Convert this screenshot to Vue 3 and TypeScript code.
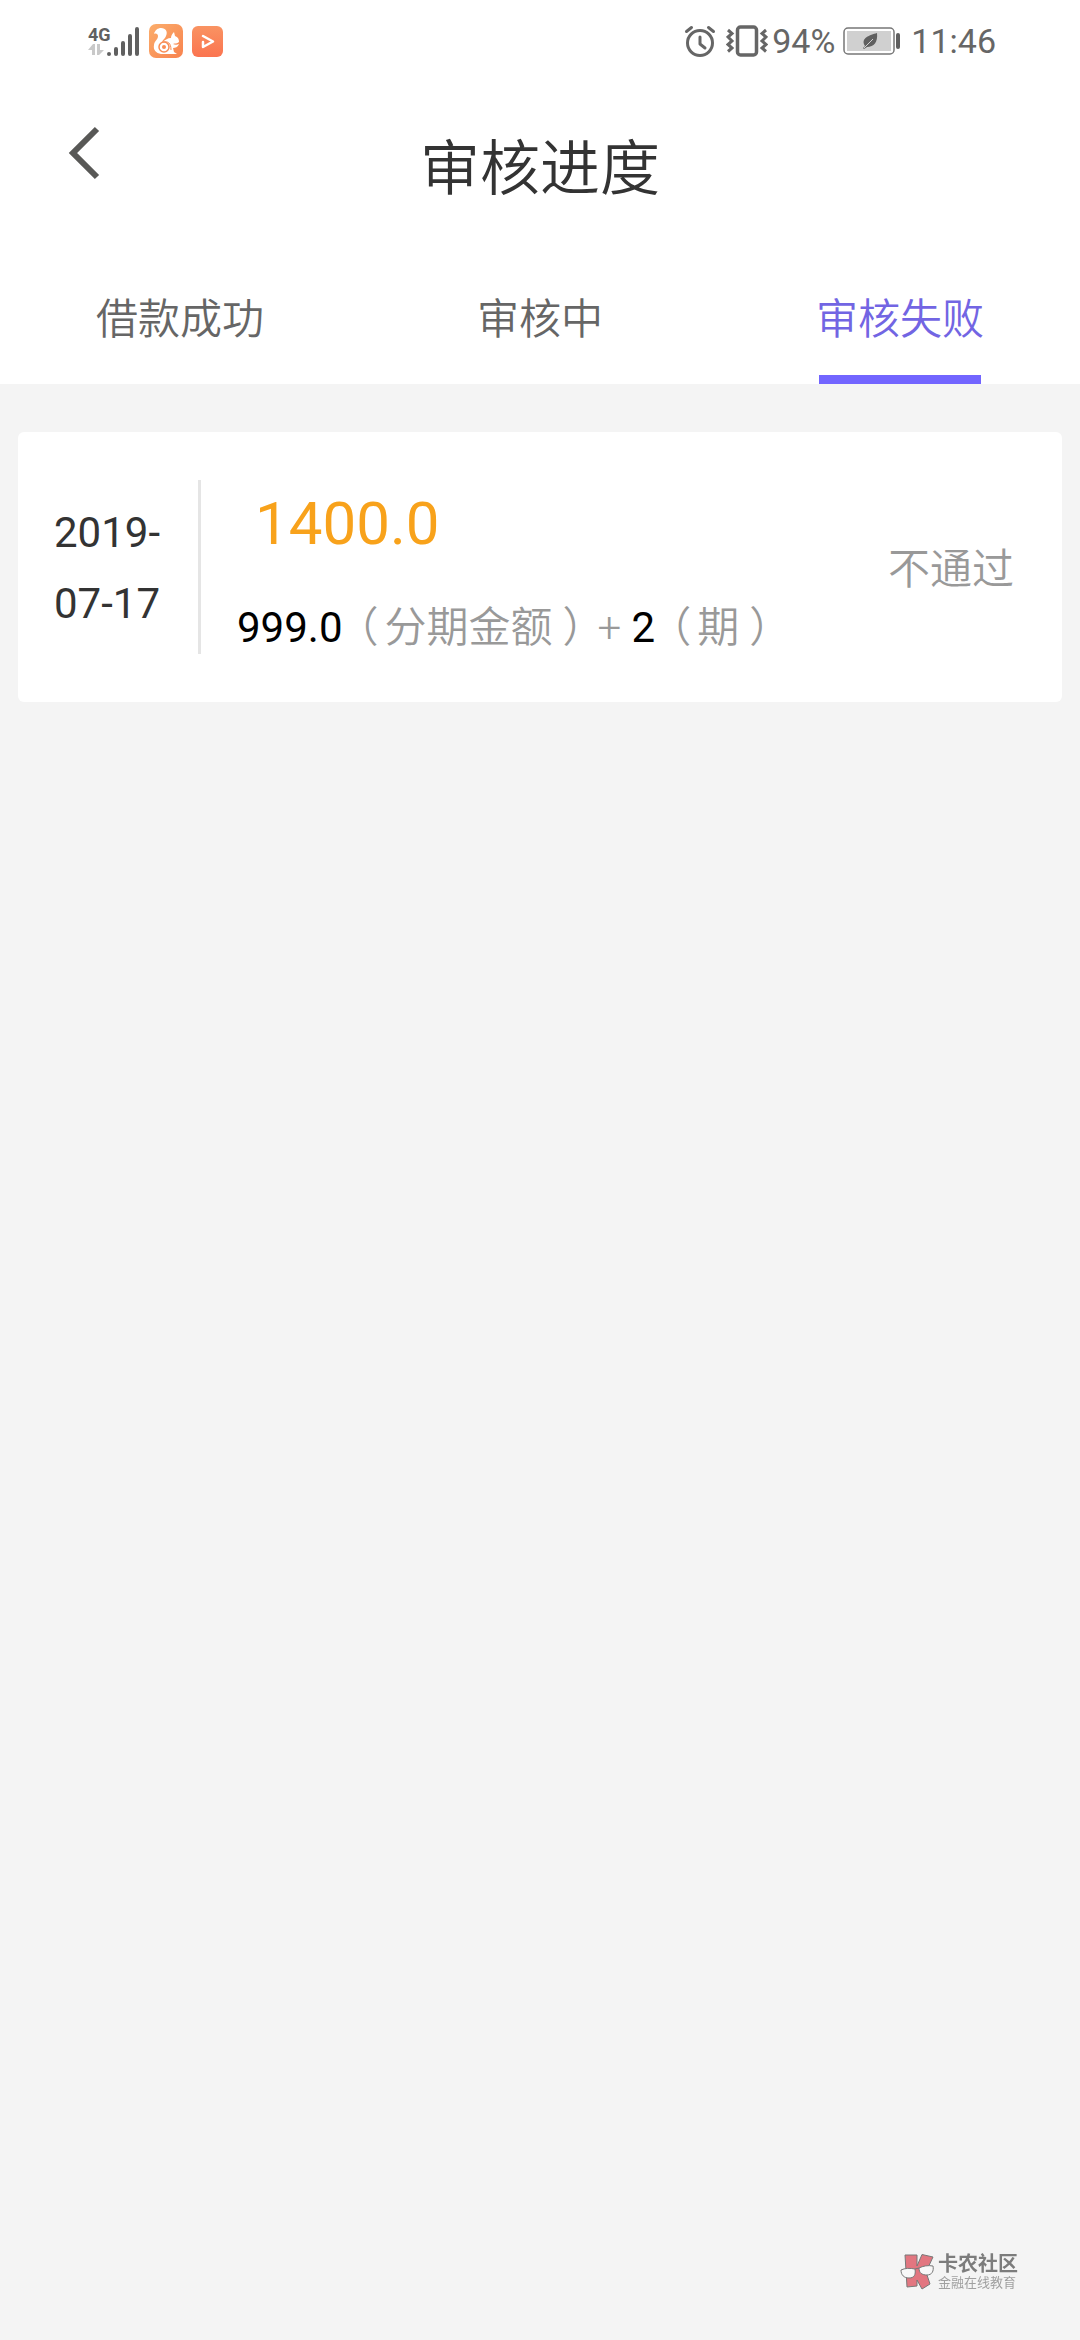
<script setup lang="ts">
import { ref } from 'vue'

interface Loan {
  date: string
  amount: string
  perTerm: string
  terms: number
  status: string
}

const tabs: string[] = ['借款成功', '审核中', '审核失败']
const active = ref<number>(2)

const loans: Loan[] = [
  { date: '2019-07-17', amount: '1400.0', perTerm: '999.0', terms: 2, status: '不通过' },
]
</script>

<template>
  <div class="page">
    <header class="top">
      <div class="status-bar">
        <div class="status-left">
          <div class="network">
            <span class="network-type">4G</span>
            <svg width="16" height="12" viewBox="0 0 16 12" fill="#c9c9c9" aria-hidden="true">
              <path d="M5 0h2v11H4V6H0z" />
              <path d="M9 0h3v6h4l-5 5H9z" />
            </svg>
          </div>
          <svg class="signal" width="34" height="32" viewBox="0 0 34 32" stroke="#606060" stroke-width="4" stroke-linecap="round" aria-hidden="true">
            <path d="M3 29v.1M10 24v5M17 18v11M24 11v18M31 4v25" />
          </svg>
          <svg class="app-a" width="34" height="34" viewBox="0 0 34 34" aria-hidden="true">
            <defs>
              <linearGradient id="ga" x1="0" y1="0" x2="1" y2="1">
                <stop offset="0" stop-color="#fbad6b" />
                <stop offset="1" stop-color="#f8834f" />
              </linearGradient>
            </defs>
            <rect width="34" height="34" rx="7" fill="url(#ga)" />
            <path d="M5 10C6 6 9 4 12 4c5 0 7 4 5 8-1 3-4 4-4 7 2-3 6-5 9-5 0-2 1-4 3-6l1 4c3 1 4 3 4 6-2 2-4 1-6 2 2 1 4 1 6 0-1 3-4 4-6 4l1 4 3 2H12c-5-1-8-4-7-9 0-4 4-5 4-9 0-2-2-3-4-2z" fill="#fff" />
            <circle cx="15" cy="23" r="5" fill="none" stroke="#f88d55" stroke-width="1.500" />
            <circle cx="15" cy="23" r="2" fill="#f88d55" />
            <path d="M14 18c5-1 8 1 8 8" fill="none" stroke="#f88d55" stroke-width="1" />
          </svg>
          <svg class="app-b" width="31" height="31" viewBox="0 0 31 31" aria-hidden="true">
            <defs>
              <linearGradient id="gb" x1="0" y1="0" x2="0" y2="1">
                <stop offset="0" stop-color="#f99362" />
                <stop offset="1" stop-color="#fb7450" />
              </linearGradient>
            </defs>
            <rect width="31" height="31" rx="6" fill="url(#gb)" />
            <path d="M11 16v5l10-5.500L11 10" fill="none" stroke="#fff" stroke-width="2.500" stroke-linecap="round" stroke-linejoin="round" />
          </svg>
        </div>
        <div class="status-right">
          <svg width="32" height="32" viewBox="0 0 32 32" fill="none" stroke="#666" stroke-width="3" stroke-linecap="round" stroke-linejoin="round" aria-hidden="true">
            <circle cx="16" cy="18" r="12.500" />
            <path d="M16 12v7l5 4M2.500 6.500l5-4M29.500 6.500l-5-4" />
          </svg>
          <svg class="vibrate" width="42" height="32" viewBox="0 0 42 32" fill="none" stroke="#666" stroke-width="3" aria-hidden="true">
            <rect x="11.500" y="2" width="19" height="28" rx="3" stroke-width="3.500" />
            <path d="M2 5l4 3.500-4 3.500 4 4-4 3.500 4 3.500-4 3.500M40 5l-4 3.500 4 3.500-4 4 4 3.500-4 3.500 4 3.500" stroke-width="3" />
          </svg>
          <span class="status-text percent">94%</span>
          <svg class="battery" width="58" height="28" viewBox="0 0 58 28" aria-hidden="true">
            <rect x="1" y="1" width="50" height="26" rx="4" fill="#fff" stroke="#777" stroke-width="1.500" />
            <rect x="4" y="4" width="44" height="20" fill="#d0d0d0" />
            <path d="M34 6c1 9-3 14-10 14l-3 2-1-1 2-2c-5-8 5-11 12-13z" fill="#606060" />
            <path d="M21 21l9-9" stroke="#d0d0d0" stroke-width="1" />
            <rect x="53" y="6" width="4" height="16" rx="2" fill="#606060" />
          </svg>
          <span class="status-text">11:46</span>
        </div>
      </div>

      <div class="title-bar">
        <button class="back" type="button" aria-label="返回">
          <svg width="32" height="54" viewBox="0 0 32 54" fill="none" stroke="#585856" stroke-width="6" aria-hidden="true">
            <path d="M29 3L5 27l24 24" />
          </svg>
        </button>
        <h1 class="title">审核进度</h1>
      </div>

      <nav class="tabs">
        <button
          v-for="(tab, i) in tabs"
          :key="tab"
          type="button"
          class="tab"
          :class="{ active: i === active }"
          @click="active = i"
        >
          {{ tab }}
        </button>
      </nav>
    </header>

    <main class="list">
      <article v-for="loan in loans" :key="loan.date" class="card">
        <time class="date" :datetime="loan.date">{{ loan.date }}</time>
        <div class="detail">
          <div class="amount">{{ loan.amount }}</div>
          <div class="plan">
            <b>{{ loan.perTerm }}</b><span class="open">（</span>分期金额<span class="close">）</span>+ <b>{{ loan.terms }}</b><span class="open">（</span>期<span class="close">）</span>
          </div>
        </div>
        <div class="result">{{ loan.status }}</div>
      </article>
    </main>

    <aside class="watermark">
      <svg width="36" height="38" viewBox="0 0 36 38" stroke="#777" stroke-width="1" stroke-linejoin="round" aria-hidden="true">
        <path d="M5 2h12v11l5-11.500L33 4l-7 15 4 12-8 5-5-9v6L7 34z" fill="#e27680" />
        <path d="M1 17c4-2 9-2 14-1 1 6-1 9-6 9s-8-3-8-8z" fill="#f8f8f8" />
        <path d="M19 15c4-2 9-3 14-2 1 5-1 9-6 9s-8-2-8-7zM15 16l4-1" fill="#f8f8f8" />
      </svg>
      <div class="watermark-text">
        <strong>卡农社区</strong>
        <small>金融在线教育</small>
      </div>
    </aside>
  </div>
</template>

<style>
body {
  background: #f4f4f4;
}
</style>

<style scoped>
.page {
  font-family: Roboto, "Noto Sans CJK SC", sans-serif;
  font-weight: 400;
  color: #333;
}

button {
  border: 0;
  padding: 0;
  background: none;
  font: inherit;
  color: inherit;
}

svg {
  display: block;
  flex: none;
}

.top {
  background: #fff;
}

.status-bar {
  display: flex;
  justify-content: space-between;
  align-items: center;
  height: 82px;
  padding: 0 84px 0 88px;
}

.status-left,
.status-right {
  display: flex;
  align-items: center;
}

.network {
  width: 18px;
}

.network-type {
  display: block;
  font: 700 18px/18px Roboto, sans-serif;
  color: #606060;
}

.app-a,
.app-b {
  margin-left: 9px;
}

.vibrate {
  margin-left: 10px;
}

.status-text {
  font-size: 34px;
  line-height: 40px;
  color: #666;
}

.percent {
  margin-left: 4px;
}

.battery {
  margin: 0 10px 0 8px;
}

.title-bar {
  display: grid;
  grid-template-columns: 1fr auto 1fr;
  height: 168px;
  padding: 0 68px;
}

.back {
  align-self: start;
  justify-self: start;
  padding-top: 44px;
}

.title {
  margin: 0;
  padding-top: 46px;
  font-size: 60px;
  line-height: 84px;
  font-weight: 350;
}

.tabs {
  display: grid;
  grid-template-columns: repeat(3, 1fr);
}

.tab {
  display: flex;
  flex-direction: column;
  align-items: center;
  padding-top: 15px;
  font-size: 42px;
  line-height: 110px;
  font-weight: 350;
  color: #666;
}

.tab::after {
  content: "";
  width: 45%;
  height: 9px;
}

.active {
  color: #7265e3;
}

.active::after {
  background: #7265ff;
}

.list {
  padding: 48px 18px;
}

.card {
  display: flex;
  align-items: center;
  padding: 48px 48px 48px 36px;
  border-radius: 6px;
  background: #fff;
  font-size: 42px;
}

.date {
  width: 108px;
  margin-right: 36px;
  padding-top: 2px;
  line-height: 71px;
}

.detail {
  flex: 1;
  padding-left: 36px;
  border-left: 3px solid #e5e5e5;
}

.amount {
  margin: 0 0 34px 18px;
  font-size: 60px;
  line-height: 88px;
  color: #f8a21b;
}

.plan {
  line-height: 52px;
  color: #999;
  font-weight: 350;
}

.plan b {
  font-weight: 400;
  color: #000;
}

/* Half-width brackets, with the spacing set by their margins. */
.open,
.close {
  font-feature-settings: "halt";
}

.open {
  margin: 0 6px 0 15px;
}

.close {
  margin: 0 14px 0 10px;
}

.result {
  padding-bottom: 4px;
  color: #999;
  font-weight: 350;
}

.watermark {
  position: fixed;
  right: 62px;
  bottom: 49px;
  display: flex;
  align-items: center;
  gap: 2px;
}

.watermark-text {
  display: flex;
  flex-direction: column;
}

.watermark strong {
  font-size: 20px;
  line-height: 22px;
  font-weight: 700;
  color: #7c7c7c;
}

.watermark small {
  font-size: 13px;
  line-height: 16px;
  color: #a0a0a0;
}
</style>
